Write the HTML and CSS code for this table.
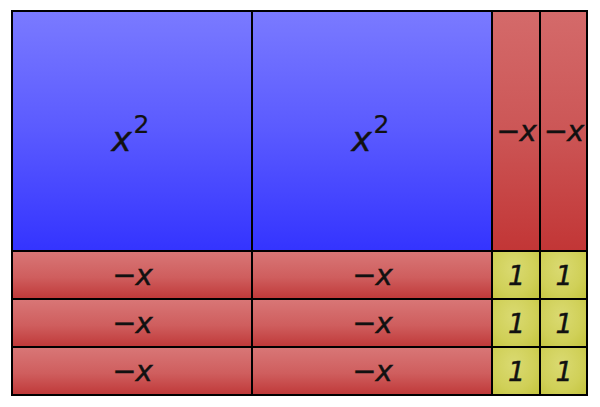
FILE: index.html
```html
<!DOCTYPE html>
<html>
<head>
<meta charset="utf-8">
<link rel="stylesheet" href="styles.css">
</head>
<body>
<div class="board">
  <div class="tile sq"><span class="lbl big">x<sup>2</sup></span></div>
  <div class="tile sq"><span class="lbl big">x<sup>2</sup></span></div>
  <div class="tile vbar"><span class="lbl">−x</span></div>
  <div class="tile vbar"><span class="lbl">−x</span></div>

  <div class="tile hbar"><span class="lbl">−x</span></div>
  <div class="tile hbar"><span class="lbl">−x</span></div>
  <div class="tile unit"><span class="lbl one">1</span></div>
  <div class="tile unit"><span class="lbl one">1</span></div>

  <div class="tile hbar"><span class="lbl">−x</span></div>
  <div class="tile hbar"><span class="lbl">−x</span></div>
  <div class="tile unit"><span class="lbl one">1</span></div>
  <div class="tile unit"><span class="lbl one">1</span></div>

  <div class="tile hbar"><span class="lbl">−x</span></div>
  <div class="tile hbar"><span class="lbl">−x</span></div>
  <div class="tile unit"><span class="lbl one">1</span></div>
  <div class="tile unit"><span class="lbl one">1</span></div>
</div>
</body>
</html>
```
FILE: styles.css
```css
html, body {
  margin: 0;
  padding: 0;
  background: #ffffff;
}
body {
  padding: 10px 0 0 11px;
}
.board {
  display: grid;
  grid-template-columns: 238px 238px 46px 45px;
  grid-template-rows: 238px 46px 46px 46px;
  gap: 2px;
  padding: 2px;
  background: #000000;
  width: max-content;
}
.tile {
  display: flex;
  align-items: center;
  justify-content: center;
  overflow: hidden;
}
.sq {
  background: linear-gradient(to bottom, #7a7aff 0%, #5a5aff 50%, #3434ff 100%);
}
.vbar {
  background: linear-gradient(to bottom, #d46a6a 0%, #cc5656 50%, #c23636 100%);
}
.hbar {
  background: linear-gradient(to bottom, #d87676 0%, #cf5e5e 55%, #c03a3a 100%);
}
.unit {
  background: radial-gradient(ellipse at 45% 35%, #dada72 0%, #d0d058 60%, #c4c43e 100%);
}
.lbl {
  font-family: "DejaVu Sans", sans-serif;
  font-style: italic;
  font-weight: 400;
  font-size: 29px;
  color: #111111;
  line-height: 1;
  letter-spacing: -1px;
  -webkit-text-stroke: 0.4px #111111;
}
.big {
  font-size: 34px;
  margin-top: 12px;
  margin-left: -4px;
}
.big sup {
  font-size: 25px;
  position: relative;
  top: -6px;
  margin-left: 3px;
  font-style: normal;
  -webkit-text-stroke: 0.2px #111111;
}
.one {
  font-size: 27px;
}
```
